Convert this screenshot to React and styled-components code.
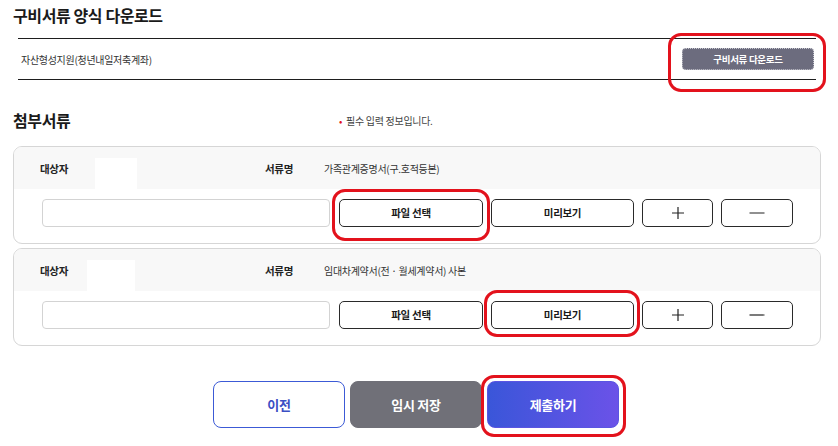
import React from 'react'
import styled, { createGlobalStyle } from 'styled-components'

const GlobalStyle = createGlobalStyle`
	* {
		box-sizing: border-box;
	}
	body {
		margin: 0;
		background: #fff;
		color: #222;
		font-family: 'Noto Sans CJK KR', 'Noto Sans', sans-serif;
	}
`

const documents = [
	{
		id: 1,
		name: '가족관계증명서(구.호적등본)',
		maskOffset: 8,
		maskWidth: 42,
		mark: 'file',
	},
	{
		id: 2,
		name: '임대차계약서(전 · 월세계약서) 사본',
		maskOffset: 0,
		maskWidth: 48,
		mark: 'preview',
	},
]

const PlusIcon = () => (
	<svg width="14" height="14" viewBox="0 0 14 14" aria-hidden="true">
		<path d="M7 1v12M1 7h12" stroke="#222" strokeWidth="1.2" fill="none" />
	</svg>
)

const MinusIcon = () => (
	<svg width="16" height="14" viewBox="0 0 16 14" aria-hidden="true">
		<path d="M0.5 7h15" stroke="#222" strokeWidth="1.2" fill="none" />
	</svg>
)

const App = () => {
	return (
		<>
			<GlobalStyle />
			<Page>
				<SectionTitle>구비서류 양식 다운로드</SectionTitle>
				<FormTable>
					<FormName>자산형성지원(청년내일저축계좌)</FormName>
					<Marked $inset="-15px -12px -22px -14px">
						<DownloadButton>구비서류 다운로드</DownloadButton>
					</Marked>
				</FormTable>

				<AttachHeader>
					<SectionTitle>첨부서류</SectionTitle>
					<Notice>필수 입력 정보입니다.</Notice>
				</AttachHeader>

				<CardList>
					{documents.map((doc) => (
						<Card key={doc.id}>
							<CardHeader>
								<Label>대상자</Label>
								<Mask $offset={doc.maskOffset} $width={doc.maskWidth} />
								<Label>서류명</Label>
								<DocName>{doc.name}</DocName>
							</CardHeader>
							<CardBody>
								<FileInput type="text" readOnly />
								{doc.mark === 'file' ? (
									<Marked $inset="-10px -7px -14px -7px">
										<ActionButton $width={144}>파일 선택</ActionButton>
									</Marked>
								) : (
									<ActionButton $width={144}>파일 선택</ActionButton>
								)}
								{doc.mark === 'preview' ? (
									<Marked $inset="-11px -6px -8px -7px">
										<ActionButton $width={143}>미리보기</ActionButton>
									</Marked>
								) : (
									<ActionButton $width={143}>미리보기</ActionButton>
								)}
								<ActionButton $width={71} aria-label="추가">
									<PlusIcon />
								</ActionButton>
								<ActionButton $width={72} aria-label="삭제">
									<MinusIcon />
								</ActionButton>
							</CardBody>
						</Card>
					))}
				</CardList>

				<BottomActions>
					<BigButton $variant="outline">이전</BigButton>
					<BigButton $variant="gray">임시 저장</BigButton>
					<Marked $inset="-6px -7px -9px -6px">
						<BigButton $variant="primary">제출하기</BigButton>
					</Marked>
				</BottomActions>
			</Page>
		</>
	)
}

const Page = styled.div`
	width: 838px;
	height: 446px;
	padding: 2px 17px 0 13px;
	overflow: hidden;
`

const SectionTitle = styled.h2`
	margin: 0;
	font-size: 16px;
	line-height: 26px;
	font-weight: 700;
	letter-spacing: -0.4px;
	color: #1a1a1a;
`

const FormTable = styled.div`
	display: flex;
	align-items: center;
	justify-content: space-between;
	height: 42px;
	margin: 10px 5px 0 5px;
	padding: 0 2px 0 3px;
	border-top: 1px solid #1e1e1e;
	border-bottom: 1px solid #1e1e1e;
`

const FormName = styled.span`
	font-size: 10px;
	letter-spacing: -0.3px;
	color: #333;
`

const Marked = styled.span`
	position: relative;
	display: inline-flex;

	&::after {
		content: '';
		position: absolute;
		inset: ${({ $inset }) => $inset};
		border: 3px solid #e3121c;
		border-radius: 13px;
		pointer-events: none;
	}
`

const DownloadButton = styled.button`
	width: 132px;
	height: 22px;
	padding: 0;
	border: 1px dotted #c8c8d0;
	border-radius: 4px;
	background: #6c6c7e;
	color: #fff;
	font-family: inherit;
	font-size: 9.5px;
	font-weight: 700;
	letter-spacing: -0.3px;
`

const AttachHeader = styled.div`
	display: grid;
	grid-template-columns: 326px auto;
	align-items: center;
	margin-top: 27px;
`

const Notice = styled.span`
	font-size: 10px;
	letter-spacing: -0.3px;
	color: #444;

	&::before {
		content: '•';
		color: #e3121c;
		margin-right: 4px;
	}
`

const CardList = styled.div`
	display: flex;
	flex-direction: column;
	gap: 4px;
	margin-top: 13px;
`

const Card = styled.div`
	border: 1px solid #d6d6d6;
	border-radius: 9px;
	overflow: hidden;
	background: #fff;
`

const CardHeader = styled.div`
	display: grid;
	grid-template-columns: 47px 178px 59px 1fr;
	align-items: center;
	height: 42px;
	padding-left: 26px;
	background: #f8f8f8;
`

const Label = styled.span`
	font-size: 10.5px;
	font-weight: 700;
	letter-spacing: -0.3px;
	color: #222;
`

const Mask = styled.span`
	align-self: end;
	width: ${({ $width }) => $width}px;
	height: 31px;
	margin-left: ${({ $offset }) => $offset}px;
	background: #fff;
`

const DocName = styled.span`
	font-size: 10px;
	letter-spacing: -0.3px;
	color: #333;
`

const CardBody = styled.div`
	display: flex;
	align-items: center;
	gap: 8px;
	padding: 10px 0 16px 28px;
`

const FileInput = styled.input`
	width: 288px;
	height: 28px;
	margin-right: 1px;
	border: 1px solid #d3d3d3;
	border-radius: 4px;
	background: #fff;
	outline: none;
`

const ActionButton = styled.button`
	display: flex;
	align-items: center;
	justify-content: center;
	width: ${({ $width }) => $width}px;
	height: 28px;
	padding: 0;
	border: 1px solid #2a2a2a;
	border-radius: 5px;
	background: #fff;
	color: #1a1a1a;
	font-family: inherit;
	font-size: 10.5px;
	font-weight: 700;
	letter-spacing: -0.3px;
	line-height: 1;
`

const BottomActions = styled.div`
	display: flex;
	justify-content: center;
	gap: 5px;
	margin-top: 35px;
	padding-right: 2px;
`

const variants = {
	outline: `
		background: #fff;
		border: 1px solid #3c5ad6;
		color: #3b4fc4;
	`,
	gray: `
		background: #707078;
		border: 1px solid #707078;
		color: #fff;
	`,
	primary: `
		background: linear-gradient(90deg, #3a56d9 0%, #6b52e8 100%);
		border: 1px solid #5a55e2;
		color: #fff;
	`,
}

const BigButton = styled.button`
	width: 132px;
	height: 47px;
	padding: 0;
	border-radius: 8px;
	font-family: inherit;
	font-size: 13px;
	font-weight: 700;
	letter-spacing: -0.3px;
	${({ $variant }) => variants[$variant]};
`

export default App
